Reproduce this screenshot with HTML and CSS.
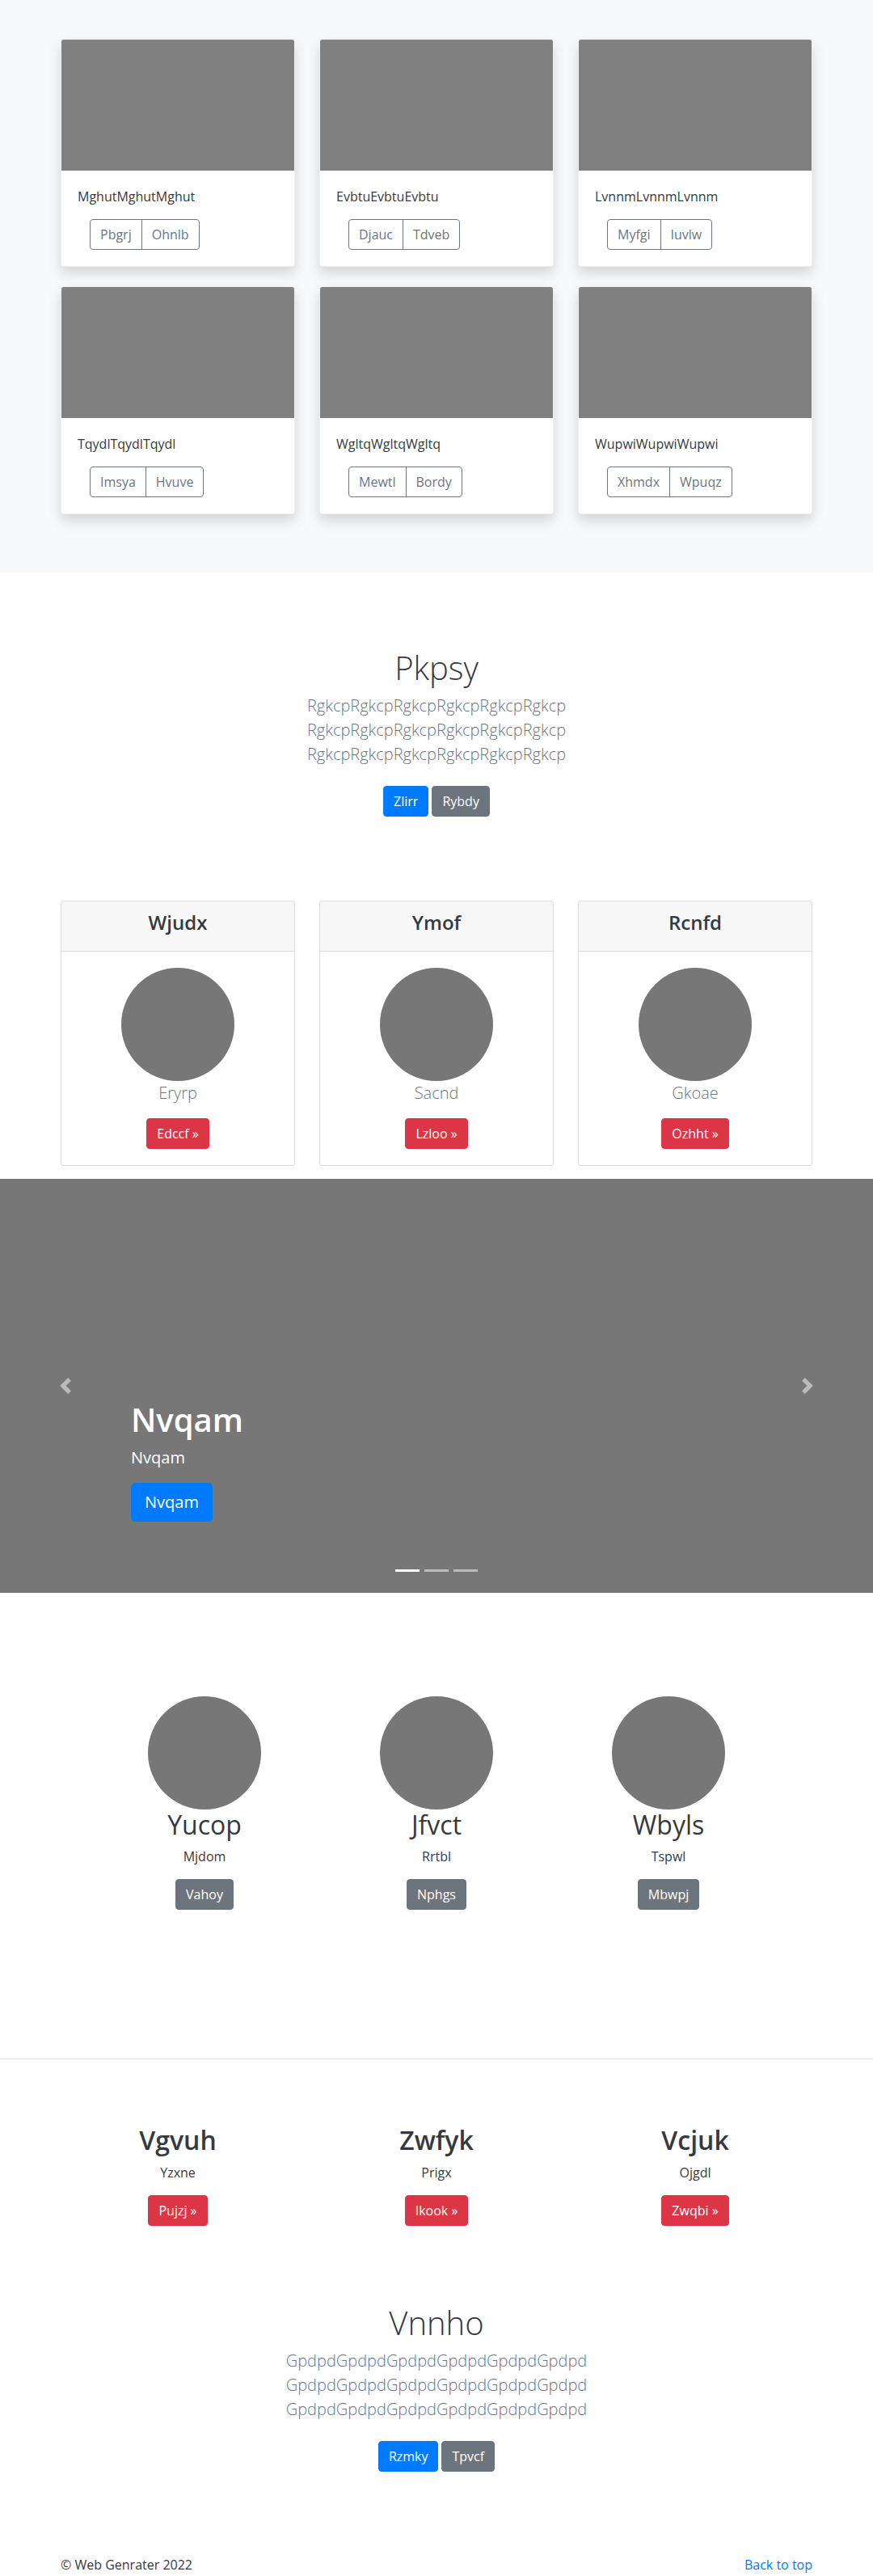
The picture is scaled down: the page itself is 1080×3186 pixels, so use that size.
FILE: index.html
```html
<!DOCTYPE html>
<html lang="en">
<head>
<meta charset="utf-8">
<title>Web Genrater</title>
<link rel="stylesheet" href="styles.css">
</head>
<body>
<main>
  <section class="album">
    <div class="container">
      <div class="grid3">
        <div class="album-card">
          <div class="thumb"></div>
          <div class="album-body">
            <p class="album-text">MghutMghutMghut</p>
            <div class="btn-group"><a class="btn btn-outline" href="#">Pbgrj</a><a class="btn btn-outline" href="#">Ohnlb</a></div>
          </div>
        </div>
        <div class="album-card">
          <div class="thumb"></div>
          <div class="album-body">
            <p class="album-text">EvbtuEvbtuEvbtu</p>
            <div class="btn-group"><a class="btn btn-outline" href="#">Djauc</a><a class="btn btn-outline" href="#">Tdveb</a></div>
          </div>
        </div>
        <div class="album-card">
          <div class="thumb"></div>
          <div class="album-body">
            <p class="album-text">LvnnmLvnnmLvnnm</p>
            <div class="btn-group"><a class="btn btn-outline" href="#">Myfgi</a><a class="btn btn-outline" href="#">Iuvlw</a></div>
          </div>
        </div>
        <div class="album-card">
          <div class="thumb"></div>
          <div class="album-body">
            <p class="album-text">TqydlTqydlTqydl</p>
            <div class="btn-group"><a class="btn btn-outline" href="#">Imsya</a><a class="btn btn-outline" href="#">Hvuve</a></div>
          </div>
        </div>
        <div class="album-card">
          <div class="thumb"></div>
          <div class="album-body">
            <p class="album-text">WgltqWgltqWgltq</p>
            <div class="btn-group"><a class="btn btn-outline" href="#">Mewtl</a><a class="btn btn-outline" href="#">Bordy</a></div>
          </div>
        </div>
        <div class="album-card">
          <div class="thumb"></div>
          <div class="album-body">
            <p class="album-text">WupwiWupwiWupwi</p>
            <div class="btn-group"><a class="btn btn-outline" href="#">Xhmdx</a><a class="btn btn-outline" href="#">Wpuqz</a></div>
          </div>
        </div>
      </div>
    </div>
  </section>

  <section class="hero hero-first">
    <div class="hero-inner">
      <h1 class="hero-title">Pkpsy</h1>
      <p class="lead">RgkcpRgkcpRgkcpRgkcpRgkcpRgkcp RgkcpRgkcpRgkcpRgkcpRgkcpRgkcp RgkcpRgkcpRgkcpRgkcpRgkcpRgkcp</p>
      <div class="actions"><a class="btn btn-primary" href="#">Zlirr</a><a class="btn btn-secondary" href="#">Rybdy</a></div>
    </div>
  </section>

  <section class="container">
    <div class="grid3">
      <div class="price-card">
        <div class="price-head"><h4>Wjudx</h4></div>
        <div class="price-body">
          <div class="avatar"></div>
          <p class="price-name">Eryrp</p>
          <a class="btn btn-danger" href="#">Edccf &raquo;</a>
        </div>
      </div>
      <div class="price-card">
        <div class="price-head"><h4>Ymof</h4></div>
        <div class="price-body">
          <div class="avatar"></div>
          <p class="price-name">Sacnd</p>
          <a class="btn btn-danger" href="#">Lzloo &raquo;</a>
        </div>
      </div>
      <div class="price-card">
        <div class="price-head"><h4>Rcnfd</h4></div>
        <div class="price-body">
          <div class="avatar"></div>
          <p class="price-name">Gkoae</p>
          <a class="btn btn-danger" href="#">Ozhht &raquo;</a>
        </div>
      </div>
    </div>
  </section>

  <div class="carousel">
    <a class="carousel-control control-prev" href="#" aria-label="Previous">
      <svg width="20" height="20" viewBox="0 0 8 8"><path fill="#fff" d="M5.25 0l-4 4 4 4 1.5-1.5L4.25 4l2.5-2.5L5.25 0z"/></svg>
    </a>
    <a class="carousel-control control-next" href="#" aria-label="Next">
      <svg width="20" height="20" viewBox="0 0 8 8"><path fill="#fff" d="M2.75 0l-1.5 1.5L3.75 4l-2.5 2.5L2.75 8l4-4-4-4z"/></svg>
    </a>
    <div class="carousel-caption">
      <h1>Nvqam</h1>
      <p class="caption-text">Nvqam</p>
      <div class="caption-actions"><a class="btn btn-primary btn-lg" href="#">Nvqam</a></div>
    </div>
    <ol class="indicators">
      <li class="active"></li>
      <li></li>
      <li></li>
    </ol>
  </div>

  <section class="marketing">
    <div class="feature">
      <div class="avatar"></div>
      <h2>Yucop</h2>
      <p>Mjdom</p>
      <div class="btn-row"><a class="btn btn-secondary" href="#">Vahoy</a></div>
    </div>
    <div class="feature">
      <div class="avatar"></div>
      <h2>Jfvct</h2>
      <p>Rrtbl</p>
      <div class="btn-row"><a class="btn btn-secondary" href="#">Nphgs</a></div>
    </div>
    <div class="feature">
      <div class="avatar"></div>
      <h2>Wbyls</h2>
      <p>Tspwl</p>
      <div class="btn-row"><a class="btn btn-secondary" href="#">Mbwpj</a></div>
    </div>
  </section>

  <hr class="divider">

  <section class="container">
    <div class="grid3 features">
      <div class="feature bold">
        <h2>Vgvuh</h2>
        <p>Yzxne</p>
        <div class="btn-row"><a class="btn btn-danger" href="#">Pujzj &raquo;</a></div>
      </div>
      <div class="feature bold">
        <h2>Zwfyk</h2>
        <p>Prigx</p>
        <div class="btn-row"><a class="btn btn-danger" href="#">Ikook &raquo;</a></div>
      </div>
      <div class="feature bold">
        <h2>Vcjuk</h2>
        <p>Ojgdl</p>
        <div class="btn-row"><a class="btn btn-danger" href="#">Zwqbi &raquo;</a></div>
      </div>
    </div>
  </section>

  <section class="hero hero-second">
    <div class="hero-inner">
      <h1 class="hero-title">Vnnho</h1>
      <p class="lead">GpdpdGpdpdGpdpdGpdpdGpdpdGpdpd GpdpdGpdpdGpdpdGpdpdGpdpdGpdpd GpdpdGpdpdGpdpdGpdpdGpdpdGpdpd</p>
      <div class="actions"><a class="btn btn-primary" href="#">Rzmky</a><a class="btn btn-secondary" href="#">Tpvcf</a></div>
    </div>
  </section>
</main>

<footer class="container footer">
  <p>&copy; Web Genrater 2022</p>
  <p><a class="top-link" href="#">Back to top</a></p>
</footer>
</body>
</html>
```

FILE: styles.css
```css
* {
  box-sizing: border-box;
}

body {
  margin: 0;
  font-family: "Open Sans", "Noto Sans", "Liberation Sans", sans-serif;
  font-size: 16px;
  line-height: 1.5;
  color: #212529;
  background: #fff;
}

.container {
  width: 960px;
  margin: 0 auto;
  padding: 0 15px;
}

.grid3 {
  display: grid;
  grid-template-columns: repeat(3, 290px);
  column-gap: 30px;
}

/* Buttons */
.btn {
  display: inline-block;
  font-size: 16px;
  line-height: 24px;
  padding: 6px 12px;
  border: 1px solid transparent;
  border-radius: 4px;
  text-decoration: none;
  text-align: center;
  white-space: nowrap;
}

.btn-lg {
  font-size: 20px;
  line-height: 30px;
  padding: 8px 16px;
  border-radius: 5px;
}

.btn-primary {
  background: #007bff;
  border-color: #007bff;
  color: #fff;
}

.btn-secondary {
  background: #6c757d;
  border-color: #6c757d;
  color: #fff;
}

.btn-danger {
  background: #dc3545;
  border-color: #dc3545;
  color: #fff;
}

.btn-outline {
  background: transparent;
  border-color: #6c757d;
  color: #6c757d;
}

.btn-group {
  display: inline-flex;
  margin-left: 15px;
}

.btn-group .btn:first-child {
  border-top-right-radius: 0;
  border-bottom-right-radius: 0;
}

.btn-group .btn + .btn {
  margin-left: -1px;
  border-top-left-radius: 0;
  border-bottom-left-radius: 0;
}

/* Album */
.album {
  background: #f8f9fa;
  padding: 48px 0;
}

.album-card {
  background: #fff;
  border: 1px solid rgba(0, 0, 0, 0.06);
  border-radius: 4px;
  box-shadow: 0 8px 16px rgba(0, 0, 0, 0.15);
  margin-bottom: 24px;
  overflow: hidden;
}

.thumb {
  height: 162px;
  background: #808080;
}

.album-body {
  padding: 20px;
}

.album-text {
  margin: 0 0 16px;
  font-size: 16px;
  line-height: 24px;
  color: #343a40;
}

/* Hero */
.hero {
  text-align: center;
}

.hero-first {
  padding: 94px 0 96px;
}

.hero-second {
  padding: 80px 0 0;
}

.hero-inner {
  max-width: 450px;
  margin: 0 auto;
}

.hero-title {
  font-size: 40px;
  font-weight: 300;
  line-height: 48px;
  margin: 0 0 8px;
  color: #343a40;
}

.lead {
  font-size: 20px;
  font-weight: 300;
  line-height: 30px;
  color: #6c757d;
  margin: 0 0 16px;
}

.actions {
  display: flex;
  justify-content: center;
  gap: 4px;
  padding: 8px 0;
}

/* Pricing-like cards */
.price-card {
  background: #fff;
  border: 1px solid rgba(0, 0, 0, 0.125);
  border-radius: 4px;
  margin-bottom: 16px;
  text-align: center;
  overflow: hidden;
}

.price-head {
  background: rgba(0, 0, 0, 0.03);
  border-bottom: 1px solid rgba(0, 0, 0, 0.125);
  padding: 12px 20px;
}

.price-head h4 {
  font-size: 24px;
  font-weight: 600;
  line-height: 28.8px;
  margin: 0 0 8px;
  color: #343a40;
}

.price-body {
  padding: 20px;
}

.avatar {
  width: 140px;
  height: 140px;
  border-radius: 50%;
  background: #777;
  margin: 0 auto;
}

.price-name {
  font-size: 20px;
  font-weight: 300;
  line-height: 30px;
  color: #6c757d;
  margin: 0 0 16px;
}

/* Carousel */
.carousel {
  position: relative;
  height: 512px;
  background: #777;
  margin-bottom: 128px;
  overflow: hidden;
}

.carousel-control {
  position: absolute;
  top: 0;
  bottom: 0;
  width: 15%;
  display: flex;
  align-items: center;
  justify-content: center;
  opacity: 0.5;
}

.control-prev {
  left: 0;
}

.control-next {
  right: 0;
}

.carousel-caption {
  position: absolute;
  left: 15%;
  right: 15%;
  bottom: 52px;
  padding-bottom: 20px;
  color: #fff;
  text-align: left;
}

.carousel-caption h1 {
  font-size: 40px;
  font-weight: 600;
  line-height: 48px;
  margin: 0 0 8px;
}

.caption-text {
  font-size: 20px;
  line-height: 30px;
  margin: 0 0 16px;
}

.caption-actions {
  display: flex;
  margin-bottom: 16px;
}

.indicators {
  position: absolute;
  left: 0;
  right: 0;
  bottom: 16px;
  margin: 0;
  padding: 0;
  list-style: none;
  display: flex;
  justify-content: center;
}

.indicators li {
  width: 30px;
  height: 3px;
  margin: 10px 3px;
  background: #fff;
  opacity: 0.5;
}

.indicators li.active {
  opacity: 1;
}

/* Marketing */
.marketing {
  width: 861px;
  margin: 0 auto;
  display: grid;
  grid-template-columns: repeat(3, 1fr);
}

.feature {
  text-align: center;
}

.feature h2 {
  font-size: 32px;
  font-weight: 400;
  line-height: 38.4px;
  margin: 0 0 8px;
  color: #343a40;
}

.feature.bold h2 {
  font-weight: 600;
}

.feature p {
  margin: 0 0 16px;
  color: #343a40;
}

.btn-row {
  display: flex;
  justify-content: center;
  margin-bottom: 16px;
}

.divider {
  border: 0;
  border-top: 1px solid rgba(0, 0, 0, 0.1);
  margin: 168px 0 81px;
}

/* Footer */
.footer {
  display: flex;
  justify-content: space-between;
  padding-top: 95px;
}

.footer p {
  margin: 0;
  color: #343a40;
}

.top-link {
  color: #007bff;
  text-decoration: none;
}
```
